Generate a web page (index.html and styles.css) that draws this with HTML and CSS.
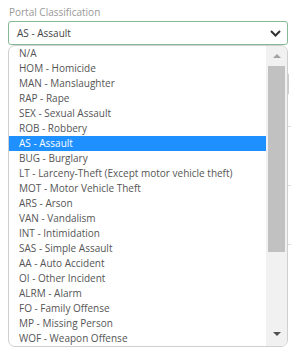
FILE: index.html
```html
<!DOCTYPE html>
<html lang="en">

<head>
    <meta charset="UTF-8">
    <meta name="viewport" content="width=device-width, initial-scale=1.0">
    <title>Portal Classification</title>
    <link rel="stylesheet" href="styles.css">
</head>

<body>

    <div class="field">
        <label class="field-label">Portal Classification</label>
        <div class="select">
            <span class="select-value">AS - Assault</span>
            <svg class="chevron" width="11" height="7" viewBox="0 0 11 7">
                <path d="M1 1 L5.5 5.5 L10 1" fill="none" stroke="#333" stroke-width="2" />
            </svg>
        </div>

        <div class="dropdown">
            <ul class="options">
                <li>N/A</li>
                <li>HOM - Homicide</li>
                <li>MAN - Manslaughter</li>
                <li>RAP - Rape</li>
                <li>SEX - Sexual Assault</li>
                <li>ROB - Robbery</li>
                <li class="selected">AS - Assault</li>
                <li>BUG - Burglary</li>
                <li>LT - Larceny-Theft (Except motor vehicle theft)</li>
                <li>MOT - Motor Vehicle Theft</li>
                <li>ARS - Arson</li>
                <li>VAN - Vandalism</li>
                <li>INT - Intimidation</li>
                <li>SAS - Simple Assault</li>
                <li>AA - Auto Accident</li>
                <li>OI - Other Incident</li>
                <li>ALRM - Alarm</li>
                <li>FO - Family Offense</li>
                <li>MP - Missing Person</li>
                <li>WOF - Weapon Offense</li>
            </ul>
            <div class="scrollbar">
                <span class="arrow arrow-up"></span>
                <div class="track">
                    <div class="thumb"></div>
                </div>
                <span class="arrow arrow-down"></span>
            </div>
        </div>
    </div>

    <!-- form content sitting under the open list -->
    <div class="behind">
        <div class="behind-input"></div>
        <div class="behind-row first"></div>
        <div class="behind-row"></div>
        <div class="behind-row"></div>
    </div>

</body>

</html>
```

FILE: styles.css
```css
* {
    margin: 0;
    padding: 0;
    box-sizing: border-box;
}

ul,
li {
    list-style-type: none;
}

html,
body {
    height: 100%;
}

body {
    font-family: "Open Sans", "Liberation Sans", sans-serif;
    font-size: 10px;
    color: #555;
    background: #fff;
    padding: 0 3px 0 8px;
    min-height: 347px;
}

.field {
    position: relative;
    width: 280px;
    padding-top: 5px;
}

.field-label {
    display: block;
    margin-bottom: 1px;
    padding-left: 1px;
    line-height: 15px;
    color: #999;
}

.select {
    height: 24px;
    border: 1px solid #86b994;
    border-radius: 3px;
    display: flex;
    align-items: center;
    justify-content: space-between;
    padding: 0 6px 0 8px;
    color: #444;
}

.select-value {
    line-height: 15px;
}

.chevron {
    margin-top: 1px;
}

/* 打开的下拉列表 */
.dropdown {
    position: absolute;
    left: 0;
    top: 45px;
    width: 280px;
    height: 302px;
    border: 1px solid #cfcfcf;
    border-radius: 7px;
    background: #fff;
    display: flex;
    overflow: hidden;
    z-index: 10;
}

.options {
    flex: 1;
}

.options li {
    height: 15px;
    line-height: 15px;
    padding-left: 10px;
    white-space: nowrap;
    color: #555;
}

.options li.selected {
    background-color: #1e90ff;
    color: #fff;
}

.scrollbar {
    width: 21px;
    background: #f1f1f1;
    display: flex;
    flex-direction: column;
    align-items: center;
}

.arrow {
    width: 0;
    height: 0;
    border-left: 4px solid transparent;
    border-right: 4px solid transparent;
}

.arrow-up {
    margin: 8px 0 8px;
    border-bottom: 4px solid #a3a3a3;
}

.arrow-down {
    margin: 6px 0 10px;
    border-top: 4px solid #505050;
}

.track {
    flex: 1;
    width: 100%;
    padding: 0 2px;
}

.thumb {
    height: 186px;
    background: #c1c1c1;
}

.behind {
    padding-top: 27px;
}

.behind-input {
    height: 24px;
    border: 1px solid #ccc;
    border-radius: 3px;
    width: 281px;
}

.behind-row {
    height: 59px;
    border-bottom: 1px solid #ddd;
    width: 283px;
}

.behind-row.first {
    height: 31px;
}
```
